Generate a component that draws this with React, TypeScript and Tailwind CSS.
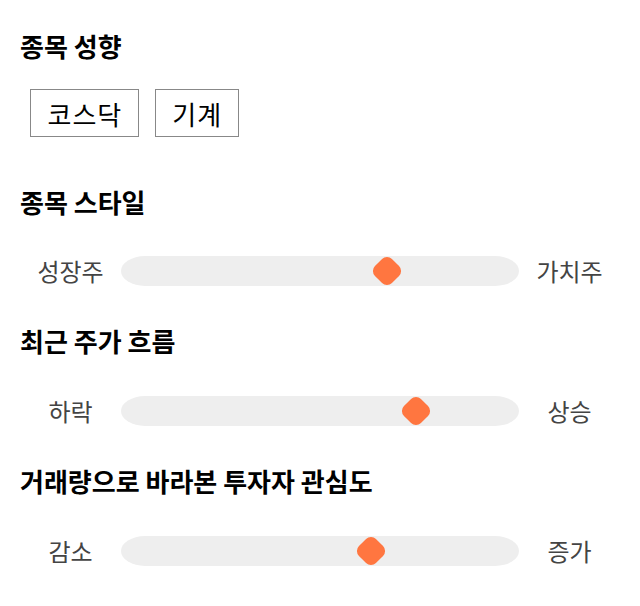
import React from "react";

const font = { fontFamily: '"Noto Sans CJK KR", "Noto Sans", sans-serif' };

function Heading({ children }: { children: React.ReactNode }) {
  return <h2 className="text-[26px] font-bold leading-[30px] text-black px-[20px]">{children}</h2>;
}

function Slider({ left, right, pos }: { left: string; right: string; pos: number }) {
  return (
    <div className="flex items-center px-5 h-[30px]">
      <div className="w-[101px] text-center text-[24px] text-[#444] leading-[30px]">{left}</div>
      <div className="relative flex-1 h-[30px] bg-[#eeeeee] rounded-[24px/15px]">
        <div className="absolute inset-y-0 w-0 flex items-center justify-center" style={{ left: `${pos}px` }}>
          <div className="shrink-0 w-[24px] h-[24px] bg-[#ff7640] rounded-[7px] rotate-45" />
        </div>
      </div>
      <div className="w-[101px] text-center text-[24px] text-[#444] leading-[30px]">{right}</div>
    </div>
  );
}

export default function App() {
  return (
    <div className="w-[640px] h-[606px] bg-white" style={font}>
      <div className="pt-[31px]">
        <Heading>종목 성향</Heading>
      </div>
      <div className="flex gap-4 px-[30px] mt-[28px]">
        <div className="h-[48px] pl-[16.5px] pr-[15.5px] border border-[#888] flex items-center text-[26px] tracking-[1px] text-black">코스닥</div>
        <div className="h-[48px] pl-[16.5px] pr-[15.5px] border border-[#888] flex items-center text-[26px] tracking-[1px] text-black">기계</div>
      </div>
      <div className="mt-[50px]">
        <Heading>종목 스타일</Heading>
      </div>
      <div className="mt-[39px]">
        <Slider left="성장주" right="가치주" pos={266} />
      </div>
      <div className="mt-[40px]">
        <Heading>최근 주가 흐름</Heading>
      </div>
      <div className="mt-[40px]">
        <Slider left="하락" right="상승" pos={295} />
      </div>
      <div className="mt-[40px]">
        <Heading>거래량으로 바라본 투자자 관심도</Heading>
      </div>
      <div className="mt-[40px]">
        <Slider left="감소" right="증가" pos={250} />
      </div>
    </div>
  );
}
